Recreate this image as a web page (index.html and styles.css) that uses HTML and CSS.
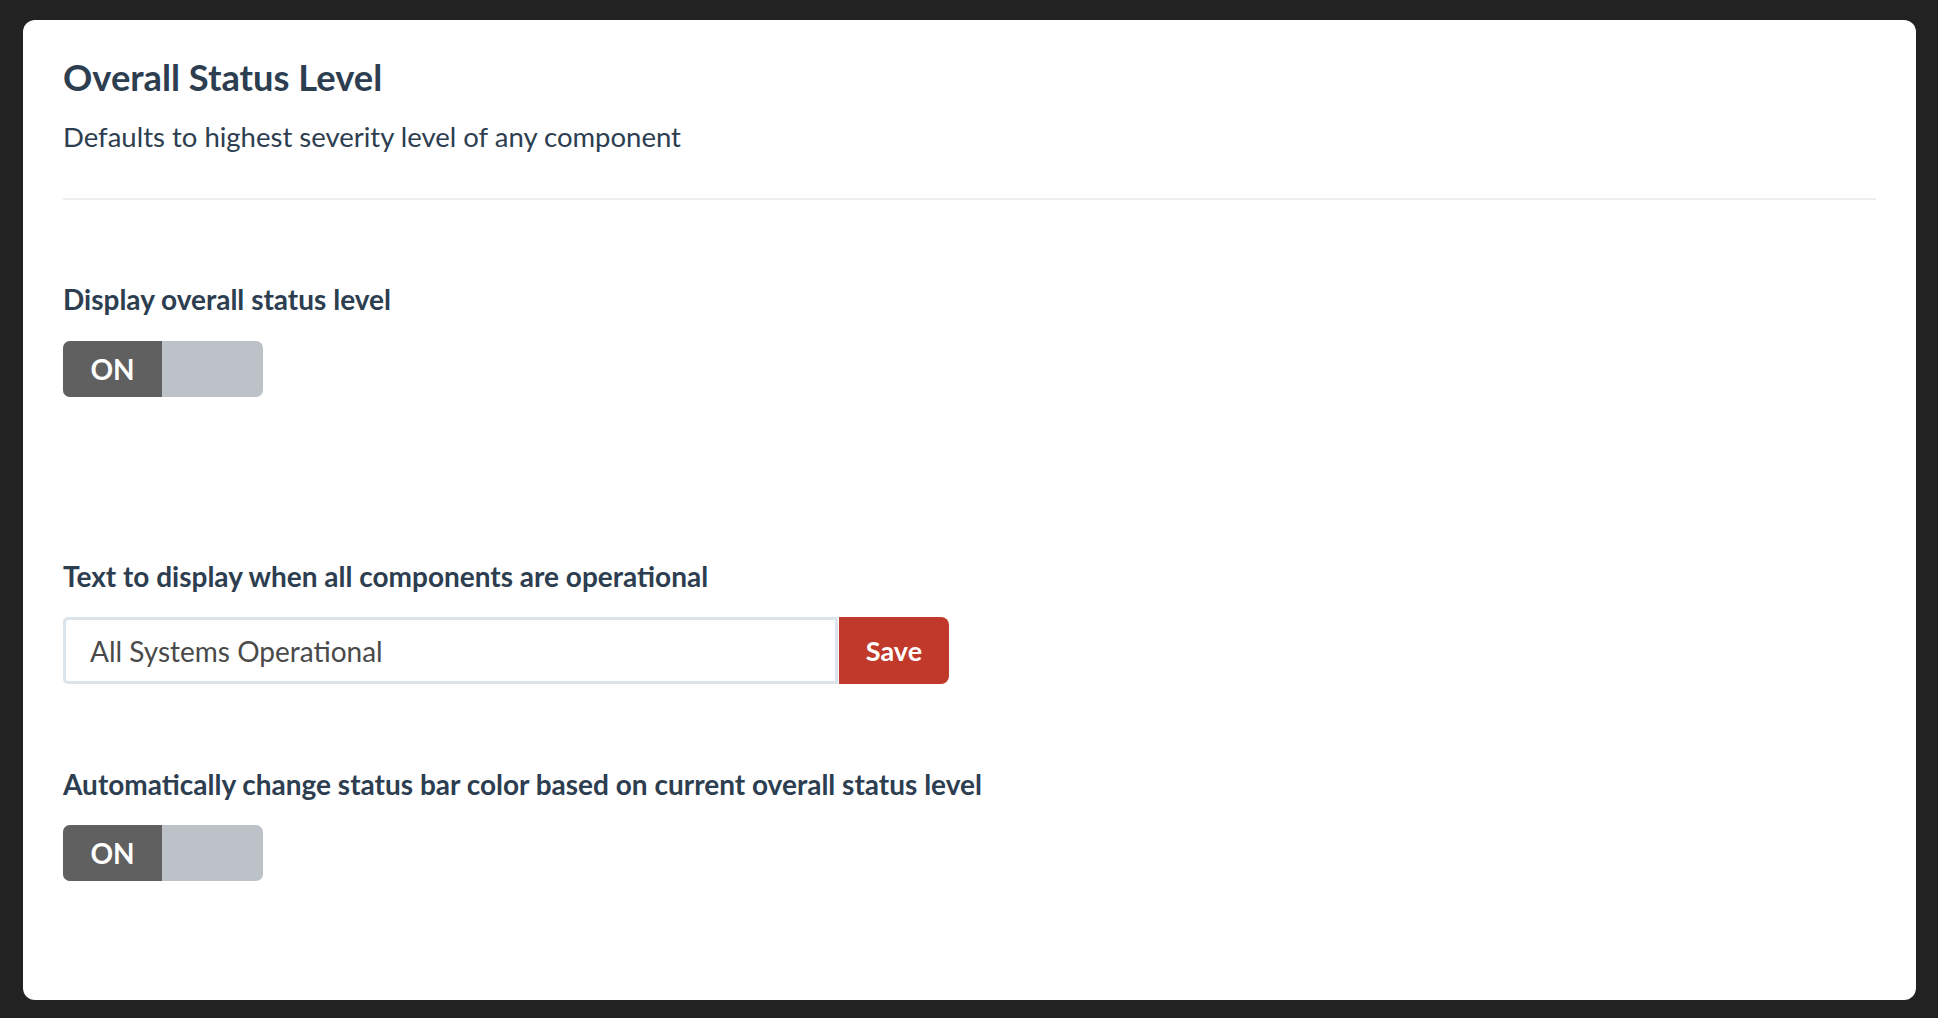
FILE: index.html
```html
<!DOCTYPE html>
<html lang="en">
<head>
  <meta charset="UTF-8">
  <title>Overall Status Level</title>
  <link rel="stylesheet" href="styles.css">
</head>
<body>
  <div class="card">
    <h2>Overall Status Level</h2>
    <p class="subtitle">Defaults to highest severity level of any component</p>
    <hr class="divider">

    <div class="field field-spaced">
      <label class="field-label">Display overall status level</label>
      <div class="toggle">
        <span class="toggle-on">ON</span>
        <span class="toggle-off"></span>
      </div>
    </div>

    <div class="field">
      <label class="field-label" for="okText">Text to display when all components are operational</label>
      <div class="input-group">
        <input id="okText" type="text" value="All Systems Operational">
        <button class="btn-save">Save</button>
      </div>
    </div>

    <div class="field">
      <label class="field-label">Automatically change status bar color based on current overall status level</label>
      <div class="toggle">
        <span class="toggle-on">ON</span>
        <span class="toggle-off"></span>
      </div>
    </div>
  </div>
</body>
</html>
```

FILE: styles.css
```css
html, body {
  margin: 0;
  padding: 0;
}
body {
  font-family: Lato, "Open Sans", sans-serif;
  background-color: #222;
  color: #2c3e50;
  padding: 20px 22px 18px 23px;
}
.card {
  background-color: #fff;
  border-radius: 12px;
  padding: 36px 40px 120px 40px;
  height: 980px;
  box-sizing: border-box;
}
.card h2 {
  margin: 0;
  font-size: 36.3px;
  font-weight: 700;
  line-height: 1.2;
}
.subtitle {
  margin: 20px 0 0 0;
  font-size: 27.5px;
  line-height: 1.2;
}
.divider {
  border: 0;
  border-top: 2px solid #eee;
  margin: 45px 0 0 0;
}
.field {
  margin-top: 83.5px;
}
.field-spaced {
  margin-bottom: 163px;
}
.field-label {
  display: block;
  font-size: 28px;
  font-weight: 700;
  line-height: 1.2;
  margin-bottom: 24px;
}
.toggle {
  display: flex;
  width: 200px;
  height: 56px;
  border-radius: 7px;
  overflow: hidden;
  background-color: #bdc2c8;
}
.toggle-on {
  width: 99px;
  background-color: #606060;
  color: #fff;
  font-weight: 700;
  font-size: 28px;
  display: flex;
  align-items: center;
  justify-content: center;
}
.input-group {
  display: flex;
}
.input-group input {
  width: 775px;
  height: 67px;
  box-sizing: border-box;
  border: 3px solid #dbe3eb;
  border-radius: 5px 0 0 5px;
  padding: 0 24px;
  font-family: Lato, "Open Sans", sans-serif;
  font-size: 28px;
  color: #4a4a4a;
  outline: none;
}
.btn-save {
  width: 110px;
  height: 67px;
  margin-left: 1px;
  border: 0;
  border-radius: 0 8px 8px 0;
  background-color: #c0392b;
  color: #fff;
  font-family: Lato, "Open Sans", sans-serif;
  font-size: 27px;
  font-weight: 700;
}
```
